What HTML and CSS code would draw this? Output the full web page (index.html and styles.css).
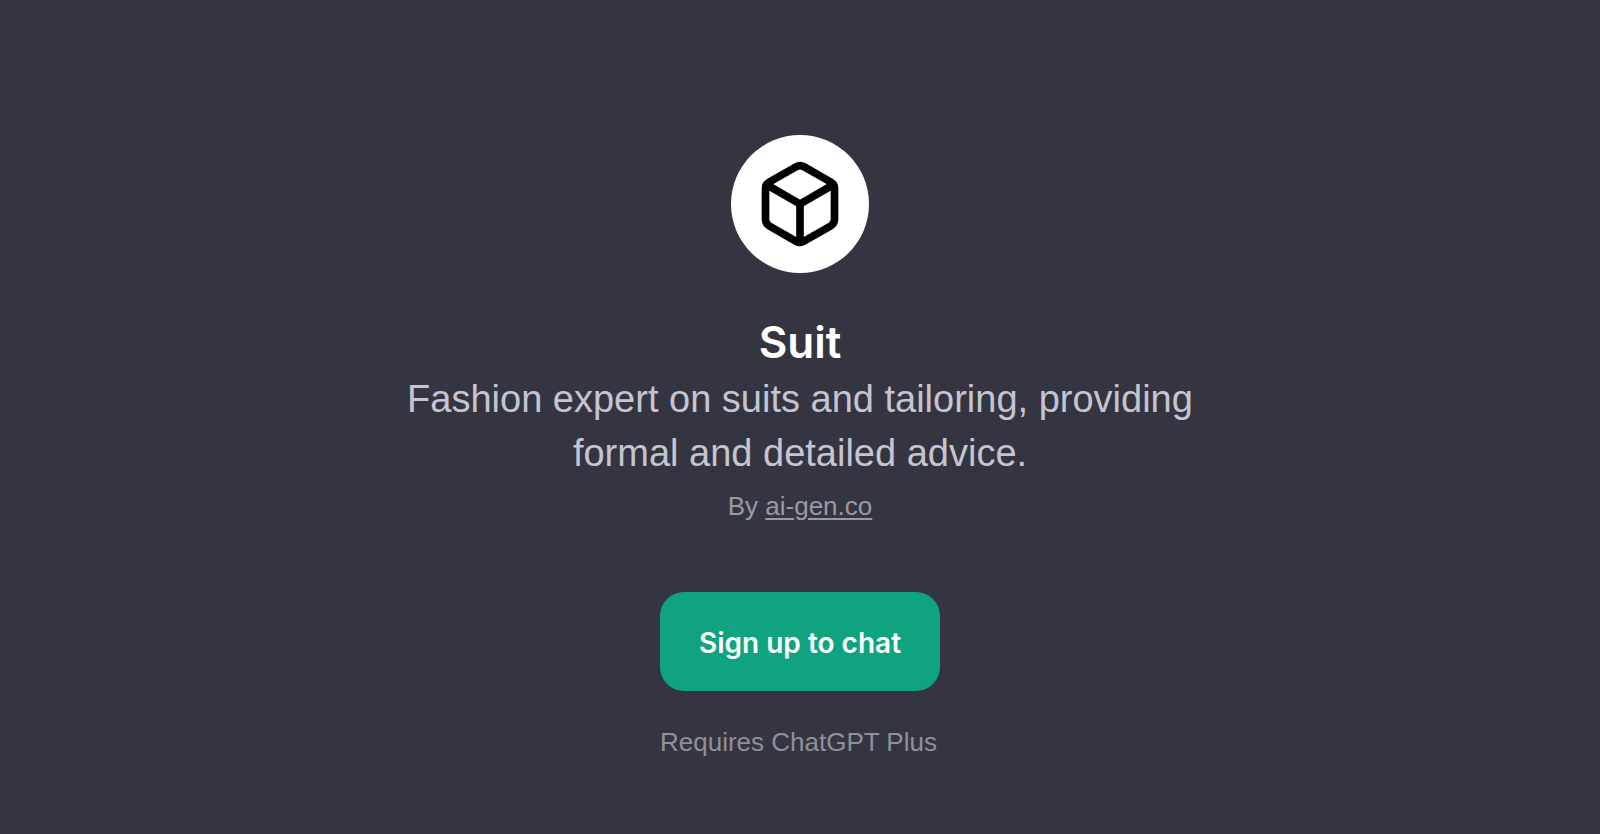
FILE: index.html
```
<!DOCTYPE html>
<html lang="en">
<head>
<meta charset="utf-8">
<meta name="viewport" content="width=device-width, initial-scale=1">
<title>Suit</title>
<link rel="stylesheet" href="styles.css">
</head>
<body>
<main class="card">
  <div class="avatar">
    <svg class="avatar-icon" viewBox="0 0 24 24" fill="none" stroke="currentColor" stroke-width="2" stroke-linecap="round" stroke-linejoin="round" aria-hidden="true">
      <path d="M21 16V8a2 2 0 0 0-1-1.73l-7-4a2 2 0 0 0-2 0l-7 4A2 2 0 0 0 3 8v8a2 2 0 0 0 1 1.73l7 4a2 2 0 0 0 2 0l7-4A2 2 0 0 0 21 16z"/>
      <path d="M3.27 6.96 12 12.01l8.73-5.05"/>
      <path d="M12 22V12"/>
    </svg>
  </div>
  <h1 class="title">Suit</h1>
  <p class="description">Fashion expert on suits and tailoring, providing formal and detailed advice.</p>
  <p class="author">By <a class="author-link" href="#">ai-gen.co</a></p>
  <div class="actions">
    <button class="signup" type="button">Sign up to chat</button>
    <p class="note">Requires ChatGPT Plus</p>
  </div>
</main>
</body>
</html>
```
FILE: styles.css
```
* {
  box-sizing: border-box;
}

body {
  margin: 0;
  min-height: 100vh;
  background: #343541;
  color: #fff;
  font-family: "Liberation Sans", Arial, sans-serif;
}

.card {
  display: flex;
  flex-direction: column;
  align-items: center;
  padding: 135px 24px 56px;
  text-align: center;
}

.avatar {
  display: flex;
  align-items: center;
  justify-content: center;
  width: 138px;
  height: 138px;
  border-radius: 50%;
  background: #fff;
  color: #000;
}

.avatar-icon {
  width: 92px;
  height: 92px;
}

.title {
  margin: 39px 0 0;
  font-family: Inter, sans-serif;
  font-size: 44px;
  line-height: 60px;
  font-weight: 600;
}

.description {
  max-width: 840px;
  margin: 0;
  color: #c5c5d2;
  font-size: 38px;
  line-height: 54px;
}

.author {
  margin: 6px 0 0;
  color: #999aa2;
  font-size: 26px;
  line-height: 40px;
}

.author-link {
  color: inherit;
  text-decoration-thickness: 2px;
  text-underline-offset: 3px;
}

.actions {
  display: flex;
  flex-direction: column;
  gap: 32px;
  margin-top: 66px;
}

.signup {
  padding: 32px 39px 28px;
  border: 0;
  border-radius: 24px;
  background: #10a37f;
  color: #fff;
  font-family: Inter, sans-serif;
  font-size: 28px;
  line-height: 39px;
  font-weight: 600;
  cursor: pointer;
}

.note {
  margin: 0;
  color: #8f9098;
  font-size: 26px;
  line-height: 38px;
  text-align: left;
}
```
